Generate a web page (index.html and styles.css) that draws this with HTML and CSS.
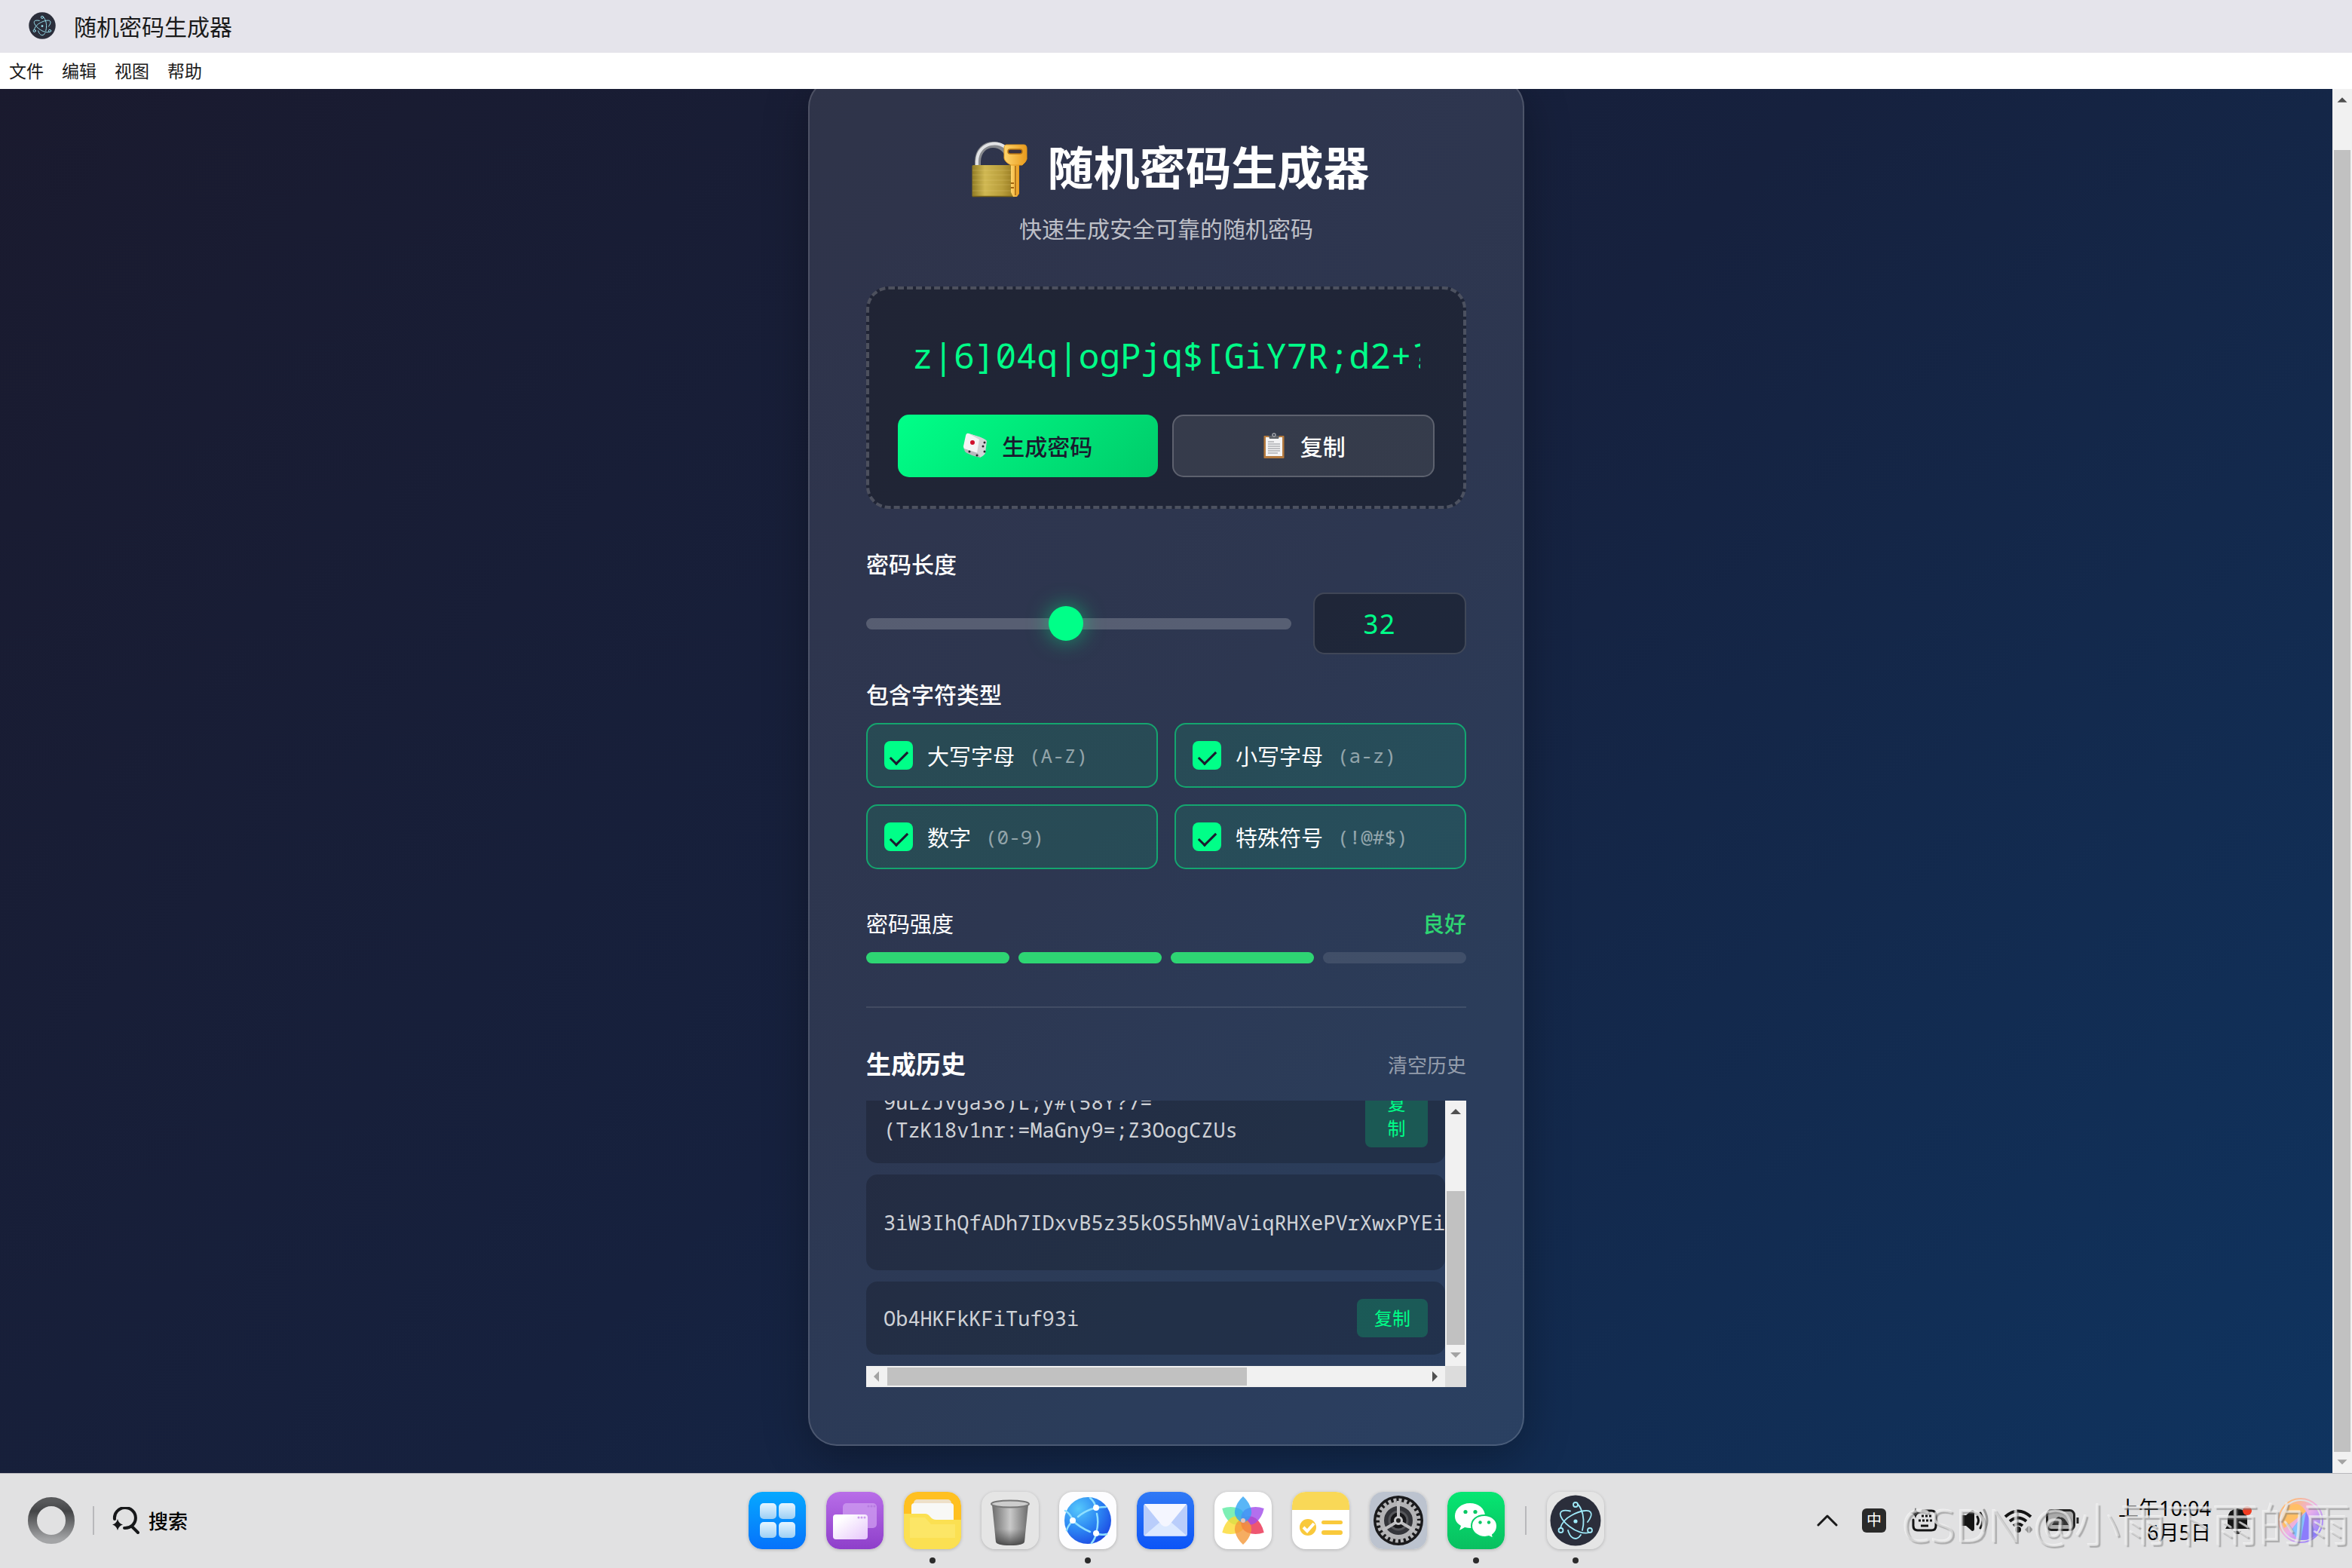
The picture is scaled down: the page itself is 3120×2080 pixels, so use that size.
FILE: index.html
```html
<!DOCTYPE html>
<html lang="zh-CN">
<head>
    <meta charset="UTF-8">
    <meta name="viewport" content="width=device-width, initial-scale=1.0">
    <title>随机密码生成器</title>
    <link rel="stylesheet" href="styles.css">
</head>
<body>
    <!-- Shared icon -->
    <svg width="0" height="0" class="defs">
        <symbol id="electron" viewBox="0 0 76 76">
            <circle cx="38" cy="38" r="33.500" fill="#2b2e3b"/>
            <g fill="none" stroke="#9feaf9" stroke-width="1.800" stroke-linecap="round">
                <path d="M31 25.500C24 24 19 25 18 28c-1.500 4 4 12 12 18 9 7 19 10 26 8"/>
                <path d="M38 15c5 1 10 11 10.500 22 .3 5-.4 10-1.500 14"/>
                <path d="M54 40c4-5 6-10 4-13-3-4-14-2-25 4-8 4-14 11-15 17"/>
                <path d="M28 51c2 7 6 11 10 11 3 0 5-2 7-5"/>
                <circle cx="38" cy="17" r="3" fill="#2b2e3b"/>
                <circle cx="18.500" cy="51" r="3" fill="#2b2e3b"/>
                <circle cx="57" cy="51" r="3" fill="#2b2e3b"/>
            </g>
            <circle cx="38" cy="39" r="2.600" fill="#9feaf9"/>
        </symbol>
    </svg>

    <header class="titlebar">
        <svg class="titlebar-icon" viewBox="4 4 68 68"><use href="#electron" width="76" height="76"/></svg>
        <span>随机密码生成器</span>
    </header>
    <nav class="menubar">
        <a href="#">文件</a>
        <a href="#">编辑</a>
        <a href="#">视图</a>
        <a href="#">帮助</a>
    </nav>

    <div class="window">
        <div class="viewport">
            <main class="page">
                <div class="card">
                    <h1>
                        <svg class="lock-icon" viewBox="0 3 100 84">
                            <defs>
                                <linearGradient id="brass" x1="0" y1="0" x2="1" y2="0">
                                    <stop offset="0" stop-color="#8f7a24"/>
                                    <stop offset=".3" stop-color="#d0b852"/>
                                    <stop offset=".7" stop-color="#b89d3b"/>
                                    <stop offset="1" stop-color="#94771f"/>
                                </linearGradient>
                                <linearGradient id="gold" x1="0" y1="0" x2="1" y2="0">
                                    <stop offset="0" stop-color="#ffd56b"/>
                                    <stop offset="1" stop-color="#e89a1c"/>
                                </linearGradient>
                            </defs>
                            <path d="M20 42V36C21 7 58 7 62 34" fill="none" stroke="#85878c" stroke-width="8"/>
                            <path d="M19 42V36C20 9 52 7 59 21" fill="none" stroke="#e1e2e5" stroke-width="4"/>
                            <rect x="12.500" y="41" width="57" height="42" rx="1.500" fill="url(#brass)"/>
                            <path d="M13 48h55M13 54h55M13 61h55M13 67h55M13 75h55" stroke="#f0dc86" stroke-opacity=".25"/>
                            <path d="M13 82.500h56" stroke="#7a6318" stroke-width="1.500"/>
                            <path d="M64 40h11v39l-3 4h-5l-3-6z" fill="url(#gold)"/>
                            <path d="M70 42v39" stroke="#a3640e" stroke-width="1.500"/>
                            <path d="M64 65h4M64 71h4" stroke="#a3640e" stroke-width="2"/>
                            <path d="M58 14h23q4 0 4 5v14q-1 4-6 8H64q-8-4-9-9V19q0-5 3-5z" fill="url(#gold)" stroke="#e39a20"/>
                            <rect x="60" y="20" width="19" height="6" rx="3" fill="#3a3340" stroke="#b87513" stroke-width="1.500"/>
                        </svg>
                        随机密码生成器
                    </h1>
                    <p class="subtitle">快速生成安全可靠的随机密码</p>

                    <section class="password-box">
                        <input class="password-output" type="text" value="z|6]04q|ogPjq$[GiY7R;d2+?" aria-label="生成的密码" readonly>
                        <div class="buttons">
                            <button type="button" class="btn btn-primary">
                                <svg viewBox="0 0 34 34">
                                    <path d="M8 1l15 5-3 22L3 22Q1 21 1 18L4 4Q5 0 8 1z" fill="#f4f4f5"/>
                                    <path d="M8 1l16 5q7 3 8 5l-2 16q-1 3-7 6l-4-6 3-18z" fill="#d3d3d6"/>
                                    <path d="M2 21l18 6 4 6Q12 31 4 26q-2-2-2-5z" fill="#b9b9be"/>
                                    <circle cx="13" cy="13" r="3" fill="#d0102c"/>
                                    <g fill="#26262b"><circle cx="29" cy="13" r="1.500"/><circle cx="27" cy="18" r="1.500"/><circle cx="29" cy="25" r="1.500"/><circle cx="9" cy="25" r="1.500"/><circle cx="19" cy="30" r="1.500"/></g>
                                </svg>
                                生成密码
                            </button>
                            <button type="button" class="btn btn-secondary">
                                <svg viewBox="0 0 34 34">
                                    <rect x="3.500" y="4" width="27" height="30" rx="1" fill="#b57a3e"/>
                                    <path d="M6 6h22v25H6z" fill="#f3f3f4"/>
                                    <path d="M10 4h14l-1 4H11z" fill="#5d6066"/>
                                    <circle cx="17" cy="3" r="2" fill="none" stroke="#9da0a6" stroke-width="1.500"/>
                                    <path d="M9 12h8M9 15h16M9 18h16M9 21h16M9 24h16M9 27h13" stroke="#8b8d92" stroke-width="1.200"/>
                                </svg>
                                复制
                            </button>
                        </div>
                    </section>

                    <section class="length-section">
                        <label class="section-label" for="lengthRange">密码长度</label>
                        <div class="length-row">
                            <input type="range" id="lengthRange" min="4" max="64" value="32">
                            <input type="number" id="lengthNumber" min="4" max="64" value="32" aria-label="密码长度">
                        </div>
                    </section>

                    <section class="types-section">
                        <h2 class="section-label">包含字符类型</h2>
                        <div class="options">
                            <label class="option"><input type="checkbox" checked><span>大写字母</span><small>(A-Z)</small></label>
                            <label class="option"><input type="checkbox" checked><span>小写字母</span><small>(a-z)</small></label>
                            <label class="option"><input type="checkbox" checked><span>数字</span><small>(0-9)</small></label>
                            <label class="option"><input type="checkbox" checked><span>特殊符号</span><small>(!@#$)</small></label>
                        </div>
                    </section>

                    <section class="strength">
                        <div class="strength-header">
                            <span>密码强度</span>
                            <span class="strength-text">良好</span>
                        </div>
                        <div class="strength-bars">
                            <div class="bar active"></div>
                            <div class="bar active"></div>
                            <div class="bar active"></div>
                            <div class="bar"></div>
                        </div>
                    </section>

                    <section class="history">
                        <div class="history-header">
                            <h2>生成历史</h2>
                            <button type="button" class="clear-btn">清空历史</button>
                        </div>
                        <div class="history-scroll">
                            <ul class="history-list">
                                <li class="history-item tall">
                                    <span class="history-text">9uLZJvga38)L;y#(58Y?7=<br>(TzK18v1nr:=MaGny9=;Z3OogCZUs</span>
                                    <button type="button" class="copy-btn narrow">复制</button>
                                </li>
                                <li class="history-item tall">
                                    <span class="history-text">3iW3IhQfADh7IDxvB5z35kOS5hMVaViqRHXePVrXwxPYEi</span>
                                </li>
                                <li class="history-item">
                                    <span class="history-text">Ob4HKFkKFiTuf93i</span>
                                    <button type="button" class="copy-btn">复制</button>
                                </li>
                            </ul>
                            <div class="scrollbar vertical">
                                <svg viewBox="0 0 28 28"><path d="M7 18h14l-7-7z" fill="#505050"/></svg>
                                <div class="track"><div class="thumb history-v"></div></div>
                                <svg viewBox="0 0 28 28"><path d="M7 10h14l-7 7z" fill="#a3a3a3"/></svg>
                            </div>
                            <div class="scrollbar horizontal">
                                <svg viewBox="0 0 28 28"><path d="M17 7v14l-7-7z" fill="#a3a3a3"/></svg>
                                <div class="track"><div class="thumb history-h"></div></div>
                                <svg viewBox="0 0 28 28"><path d="M11 7v14l7-7z" fill="#505050"/></svg>
                            </div>
                            <div class="corner"></div>
                        </div>
                    </section>
                </div>
            </main>
        </div>
        <div class="scrollbar vertical">
            <svg viewBox="0 0 28 28"><path d="M7 18h14l-7-7z" fill="#505050"/></svg>
            <div class="track"><div class="thumb page-v"></div></div>
            <svg viewBox="0 0 28 28"><path d="M7 10h14l-7 7z" fill="#a3a3a3"/></svg>
        </div>
    </div>

    <footer class="taskbar">
        <div class="launcher">
            <svg class="start-icon" viewBox="0 0 62 62">
                <defs>
                    <linearGradient id="ring" x1="0" y1="0" x2="0" y2="1">
                        <stop offset="0" stop-color="#58595b"/>
                        <stop offset=".25" stop-color="#444547"/>
                        <stop offset="1" stop-color="#a3a4a6"/>
                    </linearGradient>
                </defs>
                <circle cx="31" cy="31" r="25" fill="none" stroke="url(#ring)" stroke-width="12"/>
            </svg>
            <span class="divider"></span>
            <button type="button" class="search">
                <svg viewBox="0 0 36 36">
                    <path d="M3 16A14 13.500 0 1 1 16 28M26 26l8 8" fill="none" stroke="#17181a" stroke-width="4" stroke-linecap="round"/>
                    <path d="M7 16q1.500 6 7 7.500Q8.500 25 7 31 5.500 25 0 23.500 5.500 22 7 16z" fill="#17181a"/>
                </svg>
                搜索
            </button>
        </div>

        <div class="dock">
            <button type="button" class="app" aria-label="启动器">
                <svg viewBox="0 0 76 76">
                    <defs>
                        <linearGradient id="blue" x1="0" y1="0" x2="0" y2="1"><stop offset="0" stop-color="#06a8ff"/><stop offset="1" stop-color="#0672fb"/></linearGradient>
                        <linearGradient id="ice" x1="0" y1="0" x2="0" y2="1"><stop offset="0" stop-color="#e6f5ff"/><stop offset="1" stop-color="#9ccff5"/></linearGradient>
                    </defs>
                    <rect width="76" height="76" rx="18" fill="url(#blue)"/>
                    <g fill="url(#ice)"><rect x="15" y="15" width="22" height="21" rx="5"/><rect x="40" y="15" width="22" height="21" rx="5"/><rect x="15" y="40" width="22" height="21" rx="5"/><rect x="40" y="40" width="22" height="21" rx="5"/></g>
                </svg>
            </button>
            <button type="button" class="app" aria-label="多任务">
                <svg viewBox="0 0 76 76">
                    <defs>
                        <linearGradient id="purple" x1="0" y1="0" x2="0" y2="1"><stop offset="0" stop-color="#b86de8"/><stop offset="1" stop-color="#8e3fca"/></linearGradient>
                        <linearGradient id="lilac" x1="0" y1="0" x2="1" y2="1"><stop offset=".2" stop-color="#fff"/><stop offset="1" stop-color="#e6c6fb"/></linearGradient>
                    </defs>
                    <rect width="76" height="76" rx="18" fill="url(#purple)"/>
                    <rect x="22" y="15" width="45" height="33" rx="5" fill="#cf9df0" opacity=".75"/>
                    <g fill="#b67be0"><circle cx="56" cy="19" r="1.500"/><circle cx="60" cy="19" r="1.500"/><circle cx="64" cy="19" r="1.500"/></g>
                    <rect x="9" y="30" width="46" height="33" rx="4" fill="url(#lilac)"/>
                    <g fill="#cb9aee"><circle cx="43" cy="34" r="1.500"/><circle cx="47" cy="34" r="1.500"/><circle cx="51" cy="34" r="1.500"/></g>
                </svg>
            </button>
            <button type="button" class="app running" aria-label="文件管理">
                <svg viewBox="0 0 76 76">
                    <rect width="76" height="76" rx="18" fill="#ffc021"/>
                    <rect x="13" y="10" width="50" height="20" rx="5" fill="#eee0c8"/>
                    <rect x="10" y="15" width="56" height="30" rx="4" fill="#f8f8f6"/>
                    <path d="M0 29h28q4 0 7 4 3 4 8 4h33v21q0 18-18 18H18Q0 76 0 58z" fill="#fbe052"/>
                    <path d="M8 34h20l8 9h32v18H8z" fill="#fdea75" opacity=".6"/>
                </svg>
            </button>
            <button type="button" class="app" aria-label="回收站">
                <svg viewBox="0 0 76 76">
                    <defs><linearGradient id="steel"><stop offset="0" stop-color="#6c6c6c"/><stop offset=".5" stop-color="#c9c9c9"/><stop offset="1" stop-color="#6c6c6c"/></linearGradient>
                    <linearGradient id="binshade" x1="0" y1="0" x2="0" y2="1"><stop offset=".6" stop-color="#444" stop-opacity="0"/><stop offset="1" stop-color="#333" stop-opacity=".8"/></linearGradient></defs>
                    <rect width="76" height="76" rx="18" fill="#e5e5e5"/>
                    <path d="M14 17l5 49q1 5 19 5t19-5l5-49z" fill="url(#steel)"/>
                    <path d="M14 17l5 49q1 5 19 5t19-5l5-49z" fill="url(#binshade)"/>
                    <ellipse cx="38" cy="16" rx="25" ry="4.500" fill="#cdcdcd" stroke="#777" stroke-width="2"/>
                </svg>
            </button>
            <button type="button" class="app running" aria-label="浏览器">
                <svg viewBox="0 0 76 76">
                    <defs><radialGradient id="globe" cx=".3" cy=".25" r=".9"><stop offset="0" stop-color="#55c8fb"/><stop offset=".5" stop-color="#2c86f3"/><stop offset="1" stop-color="#1a3fe0"/></radialGradient></defs>
                    <rect width="76" height="76" rx="18" fill="#fdfdff"/>
                    <circle cx="38" cy="38" r="31" fill="url(#globe)"/>
                    <g fill="none" stroke="#8fe0ff" stroke-width="2.500" stroke-linecap="round">
                        <path d="M41 8q7 6 7 13M62 20q-22 0-37 13M8 25q8 5 10 13M18 38q-7 8-8 13M18 38q9 9 23 15M50 29q3 12-1 26M49 55q-1 7-6 13M49 55q7 3 14 1"/>
                    </g>
                    <g fill="#fff"><circle cx="49" cy="21" r="4"/><circle cx="18" cy="38" r="4"/><circle cx="49" cy="55" r="4"/></g>
                </svg>
            </button>
            <button type="button" class="app" aria-label="邮件">
                <svg viewBox="0 0 76 76">
                    <defs><linearGradient id="mail" x1="0" y1="0" x2="0" y2="1"><stop offset="0" stop-color="#3079f5"/><stop offset="1" stop-color="#0c54f7"/></linearGradient></defs>
                    <rect width="76" height="76" rx="18" fill="url(#mail)"/>
                    <rect x="9" y="16" width="58" height="43" rx="3" fill="#b9cdfb"/>
                    <path d="M10 58l22-19h12l22 19z" fill="#dce9ff"/>
                    <path d="M10 16h56L43 44q-5 4-10 0z" fill="#f4f6ff"/>
                </svg>
            </button>
            <button type="button" class="app" aria-label="相册">
                <svg viewBox="0 0 76 76">
                    <defs><path id="petal" d="M38 41Q26 36 27 25 29 14 38 6q9 8 11 19 1 11-11 16z"/></defs>
                    <rect width="76" height="76" rx="18" fill="#fff"/>
                    <g fill-opacity=".8">
                        <use href="#petal" fill="#5ceba2" transform="rotate(300 38 38)"/>
                        <use href="#petal" fill="#fbd92f" transform="rotate(240 38 38)"/>
                        <use href="#petal" fill="#ea2c4d" transform="rotate(120 38 38)"/>
                        <use href="#petal" fill="#a04bea" transform="rotate(60 38 38)"/>
                        <use href="#petal" fill="#f4993a" transform="rotate(180 38 38)"/>
                        <use href="#petal" fill="#2fa4f5"/>
                    </g>
                    <circle cx="38" cy="38" r="3" fill="#e5c5bd"/>
                </svg>
            </button>
            <button type="button" class="app" aria-label="便签">
                <svg viewBox="0 0 76 76">
                    <rect width="76" height="76" rx="18" fill="#fff"/>
                    <path d="M0 24v-6Q0 0 18 0h40q18 0 18 18v6z" fill="#f9d857"/>
                    <circle cx="21" cy="47" r="11" fill="#f9c93c"/>
                    <path d="M15 47l5 5 9-10" fill="none" stroke="#fff" stroke-width="4"/>
                    <rect x="39" y="38" width="28" height="5" rx="2.500" fill="#f9c93c"/>
                    <rect x="39" y="51" width="28" height="6" rx="3" fill="#f9c93c"/>
                </svg>
            </button>
            <button type="button" class="app" aria-label="设置">
                <svg viewBox="0 0 76 76">
                    <rect width="76" height="76" rx="18" fill="#bcc3cf"/>
                    <circle cx="38" cy="38" r="33" fill="#1a1a1c"/>
                    <circle cx="38" cy="38" r="27" fill="none" stroke="#b4b4b6" stroke-width="5" stroke-dasharray="4 3.070"/>
                    <circle cx="38" cy="38" r="22" fill="#34353a" stroke="#b4b4b6" stroke-width="6"/>
                    <circle cx="38" cy="38" r="12" fill="#17171a" stroke="#55565a" stroke-width="3"/>
                    <path d="M38 33V12M34 41L17 51M42 41l17 10" stroke="#bebec0" stroke-width="4"/>
                    <circle cx="38" cy="38" r="4.500" fill="#222" stroke="#c9c9cb" stroke-width="3"/>
                </svg>
            </button>
            <button type="button" class="app running" aria-label="微信">
                <svg viewBox="0 0 76 76">
                    <defs><linearGradient id="green" x1="0" y1="0" x2="0" y2="1"><stop offset="0" stop-color="#06e672"/><stop offset="1" stop-color="#09bf60"/></linearGradient></defs>
                    <rect width="76" height="76" rx="18" fill="url(#green)"/>
                    <path d="M30 15c-12 0-20 8-20 17 0 6 3 10 8 13l-2 6 7-4c16 4 27-4 27-15 0-10-9-17-20-17z" fill="#fff"/>
                    <path d="M49 31c-10 0-17 6-17 14s8 15 18 15l5-1 6 3-1-5c4-3 6-7 6-12 0-8-8-14-17-14z" fill="#fff" stroke="#08cf68" stroke-width="2"/>
                    <g fill="#08c864"><circle cx="24" cy="26.500" r="2.600"/><circle cx="37" cy="26.500" r="2.600"/><circle cx="43.500" cy="40.500" r="2.200"/><circle cx="55" cy="40.500" r="2.200"/></g>
                </svg>
            </button>
            <span class="divider"></span>
            <button type="button" class="app running" aria-label="随机密码生成器">
                <svg viewBox="0 0 76 76"><rect width="76" height="76" rx="18" fill="#e5e5e5"/><use href="#electron" width="76" height="76"/></svg>
            </button>
        </div>

        <div class="tray">
            <svg class="chevron" viewBox="0 0 28 16"><path d="M2 14L14 2l12 12" fill="none" stroke="#1a1a1a" stroke-width="3" stroke-linecap="round" stroke-linejoin="round"/></svg>
            <span class="ime">中</span>
            <svg class="keyboard" viewBox="0 0 36 34">
                <path d="M16 4h12q6 0 6 6v14q0 6-6 6H10q-6 0-6-6v-8" fill="none" stroke="#141414" stroke-width="3" stroke-linecap="round"/>
                <path d="M7 0q1 6 7 7-6 1-7 7-1-6-7-7 6-1 7-7z" fill="#141414"/>
                <path d="M15 11h14M11 17h18" stroke="#141414" stroke-width="3" stroke-dasharray="3 2"/>
                <path d="M14 24h10" stroke="#141414" stroke-width="3"/>
            </svg>
            <div class="status">
                <svg viewBox="0 0 38 38">
                    <path d="M0 12h6l8-7q3 0 3 3v22q0 3-3 3l-8-7H0z" fill="#141414"/>
                    <path d="M21 14q3 5 0 10M25 9q6 10 0 20" fill="none" stroke="#141414" stroke-width="3" stroke-linecap="round"/>
                    <path d="M30 5q8 14 0 28" fill="none" stroke="#999" stroke-width="3" stroke-linecap="round"/>
                </svg>
                <svg viewBox="0 0 38 38">
                    <path d="M2 14q17-15 34 0M8 20q11-9 22 0M13 26q6-5 12 0" fill="none" stroke="#141414" stroke-width="4"/>
                    <circle cx="19" cy="31" r="4" fill="#141414"/>
                    <path d="M28 31l5-5v10zM39 31l-5-5v10z" fill="#999"/>
                </svg>
                <svg class="battery" viewBox="0 0 44 38">
                    <rect x="1.500" y="5.500" width="36" height="26" rx="6" fill="#aaa" stroke="#222" stroke-width="3"/>
                    <path d="M8 25q7-14 11-10 5-2 11 10z" fill="#333"/>
                    <path d="M42 15v8" stroke="#222" stroke-width="3"/>
                </svg>
            </div>
            <div class="notify">
                <time class="clock">上午10:04<br>6月5日</time>
                <svg viewBox="0 0 40 40">
                    <path d="M2 31h32l-3-5V16Q29 5 18 4 7 5 5 16v10z" fill="#141414"/>
                    <path d="M13 34h10q-1 4-5 4t-5-4z" fill="#141414"/>
                    <circle cx="31" cy="7" r="6" fill="#f23d22"/>
                </svg>
            </div>
            <svg class="assistant" viewBox="0 0 60 60">
                <defs>
                    <linearGradient id="orb" x1="0" y1="0" x2="1" y2="1"><stop offset=".1" stop-color="#ffbc6a"/><stop offset=".5" stop-color="#eab0ea"/><stop offset="1" stop-color="#7c74ff"/></linearGradient>
                </defs>
                <circle cx="30" cy="30" r="29" fill="none" stroke="url(#orb)" stroke-width="2"/>
                <circle cx="30" cy="30" r="26" fill="url(#orb)"/>
                <path d="M37 18l14 31q-9 8-21 7L18 42z" fill="#8c7cfb"/>
                <path d="M37 18L18 42q3 10 12 14z" fill="#86c3ff"/>
                <path d="M37 18L8 40Q3 29 9 18 24-2 37 18z" fill="#ffbf66"/>
            </svg>
        </div>
        <span class="watermark">CSDN @小雨下雨的雨</span>
    </footer>
</body>
</html>
```

FILE: styles.css
```css
* {
    margin: 0;
    padding: 0;
    box-sizing: border-box;
}

body {
    font-family: 'Noto Sans', 'Noto Sans CJK SC', sans-serif;
    height: 100vh;
    display: flex;
    flex-direction: column;
    overflow: hidden;
    color: #fff;
}

button,
input {
    font-family: inherit;
    border: none;
    outline: none;
}

button {
    cursor: pointer;
}

svg {
    display: block;
    flex-shrink: 0;
}

.defs {
    position: absolute;
}

/* Window chrome */
.titlebar {
    height: 70px;
    flex-shrink: 0;
    display: flex;
    align-items: center;
    gap: 24px;
    padding: 0 0 2px 38px;
    background: #e5e4eb;
    color: #1a1a1a;
    font-size: 30px;
}

.titlebar-icon {
    width: 36px;
    height: 36px;
}

.menubar {
    height: 48px;
    flex-shrink: 0;
    display: flex;
    align-items: center;
    gap: 24px;
    padding: 0 0 2px 12px;
    background: #fff;
    font-size: 23px;
}

.menubar a {
    color: #1a1a1a;
    text-decoration: none;
}

.window {
    flex: 1;
    min-height: 0;
    display: flex;
}

/* Scrolled to the end, so the content hangs from the bottom edge */
.viewport {
    flex: 1;
    min-width: 0;
    overflow: hidden;
    display: flex;
    flex-direction: column;
    justify-content: flex-end;
}

.page {
    flex-shrink: 0;
    min-height: 100%;
    display: flex;
    justify-content: center;
    align-items: center;
    padding: 38px 38px 36px;
    background: linear-gradient(135deg, #1a1a2e 0%, #16213e 50%, #0f3460 100%);
}

.card {
    width: 100%;
    max-width: 950px;
    padding: 75px 75px 76px;
    background: rgba(255, 255, 255, 0.1);
    border: 2px solid rgba(255, 255, 255, 0.15);
    border-radius: 38px;
    box-shadow: 0 15px 60px rgba(0, 0, 0, 0.3);
}

h1 {
    display: flex;
    justify-content: center;
    align-items: center;
    gap: 12px;
    font-size: 61px;
    line-height: 84px;
    font-weight: 700;
}

.lock-icon {
    width: 100px;
    height: 84px;
}

.subtitle {
    margin: 17px 0 54px;
    text-align: center;
    font-size: 30px;
    line-height: 44px;
    color: rgba(255, 255, 255, 0.7);
}

/* Password output */
.password-box {
    padding: 38px;
    background: rgba(0, 0, 0, 0.3);
    border: 4px dashed rgba(255, 255, 255, 0.2);
    border-radius: 30px;
}

.password-output {
    display: block;
    width: 100%;
    height: 98px;
    margin-bottom: 30px;
    padding: 0 19px;
    background: transparent;
    color: #00ff88;
    font-family: 'Noto Sans Mono', 'DejaVu Sans Mono', monospace;
    font-size: 46px;
}

.buttons {
    display: flex;
    gap: 19px;
}

.btn {
    flex: 1;
    height: 83px;
    display: flex;
    align-items: center;
    justify-content: center;
    gap: 18px;
    padding-bottom: 2px;
    border-radius: 15px;
    font-size: 30px;
    font-weight: 500;
}

.btn svg {
    width: 34px;
    height: 34px;
}

.btn-primary {
    background: linear-gradient(135deg, #00ff88 0%, #00cc6a 100%);
    color: #1a1a2e;
}

.btn-secondary {
    background: rgba(255, 255, 255, 0.1);
    border: 2px solid rgba(255, 255, 255, 0.2);
    color: #fff;
}

/* Length */
.length-section {
    margin-top: 52px;
}

.section-label {
    display: block;
    margin-bottom: 15px;
    font-size: 30px;
    line-height: 44px;
    font-weight: 500;
}

.length-row {
    display: flex;
    align-items: center;
    gap: 29px;
}

input[type="range"] {
    -webkit-appearance: none;
    appearance: none;
    flex: 1;
    min-width: 0;
    height: 15px;
    border-radius: 8px;
    background: rgba(255, 255, 255, 0.2);
}

input[type="range"]::-webkit-slider-thumb {
    -webkit-appearance: none;
    width: 46px;
    height: 46px;
    border-radius: 50%;
    background: #00ff88;
    box-shadow: 0 0 28px rgba(0, 255, 136, 0.5);
}

input[type="number"] {
    -moz-appearance: textfield;
    appearance: textfield;
    width: 203px;
    height: 82px;
    padding-right: 14px;
    background: rgba(0, 0, 0, 0.3);
    border: 2px solid rgba(255, 255, 255, 0.15);
    border-radius: 15px;
    color: #00ff88;
    font-family: 'Noto Sans Mono', 'DejaVu Sans Mono', monospace;
    font-size: 36px;
    text-align: center;
}

/* Character types */
.types-section {
    margin-top: 32px;
}

.options {
    display: grid;
    grid-template-columns: 1fr 1fr;
    gap: 22px;
}

.option {
    height: 86px;
    display: flex;
    align-items: center;
    gap: 19px;
    padding: 0 22px;
    background: rgba(0, 255, 136, 0.1);
    border: 2px solid rgba(0, 255, 136, 0.5);
    border-radius: 15px;
    font-size: 29px;
}

.option small {
    font-family: 'Noto Sans Mono', 'DejaVu Sans Mono', monospace;
    font-size: 26px;
    color: rgba(255, 255, 255, 0.5);
}

input[type="checkbox"] {
    -webkit-appearance: none;
    appearance: none;
    width: 38px;
    height: 38px;
    display: flex;
    align-items: center;
    justify-content: center;
    background: #00ff88;
    border-radius: 8px;
}

input[type="checkbox"]::before {
    content: "";
    width: 10px;
    height: 20px;
    border: solid #1a1a2e;
    border-width: 0 3px 3px 0;
    transform: rotate(45deg);
}

/* Strength */
.strength {
    margin-top: 51px;
}

.strength-header {
    display: flex;
    justify-content: space-between;
    margin-bottom: 15px;
    font-size: 29px;
    line-height: 44px;
}

.strength-text {
    font-weight: 500;
    color: #2ed573;
}

.strength-bars {
    display: flex;
    gap: 12px;
}

.bar {
    flex: 1;
    height: 15px;
    border-radius: 8px;
    background: rgba(255, 255, 255, 0.1);
}

.bar.active {
    background: #2ed573;
}

/* History */
.history {
    margin-top: 57px;
    padding-top: 51px;
    border-top: 2px solid rgba(255, 255, 255, 0.1);
}

.history-header {
    display: flex;
    justify-content: space-between;
    align-items: center;
    margin-bottom: 24px;
}

.history-header h2 {
    font-size: 33px;
    line-height: 48px;
    font-weight: 700;
}

.clear-btn {
    background: none;
    font-size: 26px;
    color: rgba(255, 255, 255, 0.5);
}

.history-scroll {
    display: grid;
    grid-template-columns: 1fr 28px;
    grid-template-rows: 352px 28px;
}

.history-list {
    min-width: 0;
    overflow: hidden;
    display: flex;
    flex-direction: column;
    justify-content: flex-end;
    list-style: none;
}

.history-item {
    height: 97px;
    flex-shrink: 0;
    display: flex;
    align-items: center;
    justify-content: space-between;
    margin-bottom: 15px;
    padding: 0 23px;
    background: rgba(0, 0, 0, 0.2);
    border-radius: 15px;
}

.history-item.tall {
    height: 127px;
}

.history-text {
    font-family: 'Noto Sans Mono', 'DejaVu Sans Mono', monospace;
    font-size: 27px;
    line-height: 37px;
    white-space: nowrap;
    color: rgba(255, 255, 255, 0.8);
}

.copy-btn {
    padding: 9px 23px;
    background: rgba(0, 255, 136, 0.2);
    border-radius: 8px;
    color: #00ff88;
    font-size: 24px;
    line-height: 33px;
}

.copy-btn.narrow {
    width: 83px;
}

/* Scrollbars */
.scrollbar {
    display: flex;
    background: #f1f1f1;
}

.scrollbar.vertical {
    width: 28px;
    flex-direction: column;
}

.window > .scrollbar.vertical {
    width: 26px;
}

.scrollbar svg {
    width: 100%;
    height: 28px;
}

.scrollbar.horizontal svg {
    width: 28px;
}

.track {
    flex: 1;
    display: flex;
}

.vertical .track {
    flex-direction: column;
    padding: 0 2px;
}

.horizontal .track {
    padding: 2px 0;
}

.thumb {
    background: #c1c1c1;
}

.thumb.page-v {
    height: 97%;
    margin-top: auto;
}

.thumb.history-v {
    height: 69%;
    margin-top: auto;
}

.thumb.history-h {
    width: 67%;
}

.corner {
    background: #dcdcdc;
}

/* Taskbar */
.taskbar {
    position: relative;
    height: 126px;
    flex-shrink: 0;
    display: grid;
    grid-template-columns: 1fr auto 1fr;
    align-items: center;
    padding-bottom: 2px;
    background: #e1e1e2;
    border-top: 1px solid #b9b9bd;
    color: #000;
}

.launcher {
    display: flex;
    align-items: center;
    gap: 24px;
    padding-left: 37px;
}

.start-icon {
    width: 62px;
    height: 62px;
}

.divider {
    width: 2px;
    height: 38px;
    background: #b8b8bb;
}

.search {
    display: flex;
    align-items: center;
    gap: 12px;
    background: none;
    font-size: 26px;
    font-weight: 500;
}

.search svg {
    width: 36px;
    height: 36px;
}

.dock {
    display: flex;
    align-items: center;
    gap: 27px;
}

.app {
    position: relative;
    background: none;
}

.app svg {
    width: 76px;
    height: 76px;
    border-radius: 18px;
    box-shadow: 0 1px 4px rgba(0, 0, 0, 0.2);
}

.app.running::after {
    content: "";
    position: absolute;
    left: 34px;
    bottom: -19px;
    width: 8px;
    height: 8px;
    border-radius: 50%;
    background: #2b2b2b;
}

.tray {
    display: flex;
    align-items: center;
    justify-content: flex-end;
    gap: 32px;
    padding-right: 38px;
}

.chevron {
    width: 28px;
    height: 16px;
}

.ime {
    width: 32px;
    height: 32px;
    border-radius: 6px;
    background: #2a2a2a;
    color: #fff;
    font-size: 20px;
    line-height: 32px;
    text-align: center;
}

.keyboard {
    width: 36px;
    height: 34px;
}

.status {
    display: flex;
    gap: 18px;
    margin-right: 20px;
}

.status svg {
    width: 38px;
    height: 38px;
}

.status .battery {
    width: 44px;
}

.notify {
    display: flex;
    align-items: center;
    gap: 17px;
}

.notify svg {
    width: 40px;
    height: 40px;
}

.clock {
    font-size: 27px;
    line-height: 32px;
    text-align: right;
}

.assistant {
    width: 60px;
    height: 60px;
}

.watermark {
    position: absolute;
    right: 2px;
    top: 24px;
    font-size: 61px;
    line-height: 88px;
    font-weight: 300;
    color: rgba(228, 228, 228, 0.6);
    text-shadow: 2px 2px 1px rgba(120, 120, 120, 0.5), -1px -1px 0 rgba(255, 255, 255, 0.5);
    pointer-events: none;
}
```
